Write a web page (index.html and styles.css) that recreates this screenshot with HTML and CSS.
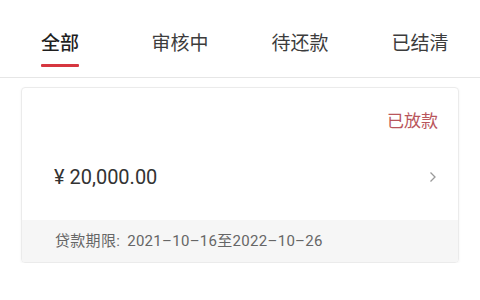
FILE: index.html
```html
<!DOCTYPE html>
<html lang="zh-CN">
<head>
  <meta charset="UTF-8">
  <meta name="viewport" content="width=device-width, initial-scale=1.0">
  <title>借款记录</title>
  <link rel="stylesheet" href="styles.css">
</head>
<body>
  <div class="tabs">
    <div class="tab active"><span>全部</span><i class="bar"></i></div>
    <div class="tab"><span>审核中</span></div>
    <div class="tab"><span>待还款</span></div>
    <div class="tab"><span>已结清</span></div>
  </div>

  <div class="card">
    <div class="card-body">
      <div class="status">已放款</div>
      <div class="amount-row">
        <span class="amount">¥ 20,000.00</span>
        <svg class="arrow" width="8" height="12" viewBox="0 0 8 12">
          <path d="M1.5 1.5 L6 6 L1.5 10.5" fill="none" stroke="#9a9a9a" stroke-width="1.3"/>
        </svg>
      </div>
    </div>
    <div class="card-foot">贷款期限: 2021–10–16至2022–10–26</div>
  </div>
</body>
</html>
```

FILE: styles.css
```css
body {
  margin: 0;
  background: #fff;
  font-family: "Noto Sans CJK SC", "Noto Sans", sans-serif;
  color: #333;
}

.tabs {
  display: grid;
  grid-template-columns: repeat(4, 1fr);
  height: 77px;
  border-bottom: 1px solid #e6e6e6;
}

.tab {
  display: flex;
  flex-direction: column;
  align-items: center;
  padding-top: 28px;
  font-size: 19px;
  line-height: 27px;
  color: #3c3c3c;
}

.tab.active {
  color: #1f1f1f;
  font-weight: 500;
}

.tab .bar {
  display: block;
  width: 38px;
  height: 3px;
  margin-top: 9px;
  background: #d6363f;
  border-radius: 1px;
}

.card {
  margin: 9px 21px 0;
  border: 1px solid #ebebeb;
  border-radius: 4px;
  overflow: hidden;
  box-shadow: 0 1px 3px rgba(0, 0, 0, 0.05);
}

.card-body {
  padding: 20px 20px 29px 32px;
}

.status {
  text-align: right;
  font-size: 17px;
  line-height: 24px;
  color: #b9565c;
}

.amount-row {
  display: flex;
  align-items: center;
  justify-content: space-between;
  margin-top: 31px;
  padding-right: 1px;
}

.amount {
  font-family: Roboto, "Noto Sans", sans-serif;
  font-size: 20px;
  line-height: 28px;
  color: #333;
}

.card-foot {
  height: 42px;
  line-height: 42px;
  padding-left: 33px;
  background: #f6f6f6;
  font-family: Roboto, "Noto Sans CJK SC", sans-serif;
  font-size: 15px;
  letter-spacing: 0.3px;
  word-spacing: 3px;
  color: #666;
}
```
